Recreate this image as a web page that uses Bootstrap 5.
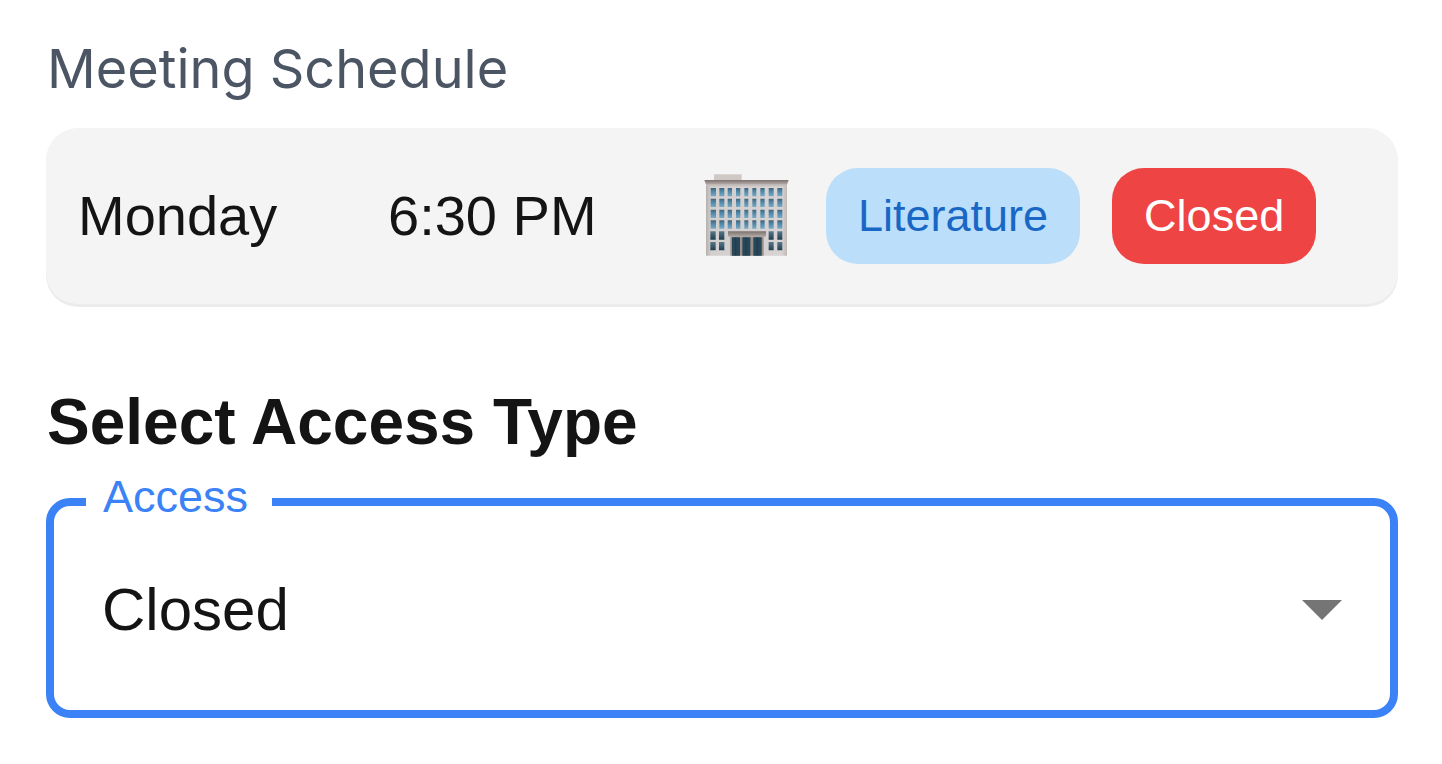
<!DOCTYPE html>
<html lang="en">
<head>
<meta charset="utf-8">
<meta name="viewport" content="width=device-width, initial-scale=1">
<title>Meeting Schedule</title>
<link href="https://cdn.jsdelivr.net/npm/bootstrap@5.3.0/dist/css/bootstrap.min.css" rel="stylesheet">
<style>
  body { font-family: "Liberation Sans", Arial, sans-serif; color: #141414; background: #fff; }
  .page { padding: 29px 44px 40px 46px; }
  .schedule-title { font: 400 54px/80px Inter, sans-serif; color: #4b5563; margin: 0 1px 19px; }
  .meeting { background: #f4f4f4; border-radius: 32px; padding: 40px 32px; box-shadow: 0 3px #ececec; margin-bottom: 78px; font-size: 56px; line-height: 96px; white-space: nowrap; }
  .slot { flex: 0 0 310px; }
  .venue { width: 96px; height: 96px; flex: none; }
  .tags { gap: 32px; }
  .chip { font-size: 45px; padding: 0 32px; border-radius: 32px; }
  .chip-topic { background: #bbdefb; color: #1967c5; }
  .chip-closed { background: #ef4444; color: #fff; }
  .access-title { font-size: 64px; line-height: 80px; font-weight: 700; margin: 0 1px 8px; }
  .access-field { border: 8px solid #3b82f6; border-radius: 24px; padding: 0 32px 24px; }
  .access-field legend { float: none; width: auto; margin: 0; padding: 0 24px 10px 17px; font-size: 45px; line-height: 54px; color: #3b82f6; }
  .access-select { appearance: none; display: block; width: 100%; height: 152px; border: 0; outline: 0; padding: 0 72px 0 16px; color: #141414; font-size: 60px;
    background: transparent url("data:image/svg+xml,%3Csvg xmlns='http://www.w3.org/2000/svg' viewBox='0 0 40 20'%3E%3Cpath d='M0 0h40L20 20z' fill='%23757575'/%3E%3C/svg%3E") no-repeat right 16px center / 40px 20px; }
</style>
</head>
<body>
<main class="page">
  <h2 class="schedule-title">Meeting Schedule</h2>
  <section class="meeting d-flex align-items-center">
    <span class="slot">Monday</span>
    <time class="slot" datetime="18:30">6:30 PM</time>
    <div class="tags d-flex align-items-center">
      <svg class="venue" viewBox="24 24 288 288" role="img" aria-label="In person">
        <defs>
          <linearGradient id="wall" x2="1" y2="0"><stop offset="0" stop-color="#b5b0ae"/><stop offset=".06" stop-color="#d2cfce"/><stop offset=".94" stop-color="#d6d3d2"/><stop offset="1" stop-color="#bfb8b5"/></linearGradient>
          <linearGradient id="glass" x2="0" y2="1"><stop offset="0" stop-color="#42647a"/><stop offset=".4" stop-color="#4f87a8"/><stop offset="1" stop-color="#79a9c6"/></linearGradient>
          <linearGradient id="dark" x2="0" y2="1"><stop offset="0" stop-color="#58788b"/><stop offset="1" stop-color="#203e50"/></linearGradient>
          <linearGradient id="roof" x2="0" y2="1"><stop offset="0" stop-color="#7c716d"/><stop offset="1" stop-color="#b8b0ad"/></linearGradient>
          <g id="floor"><path d="M62 0h16v25h-16zM88 0h15v25h-15zM113 0h13v25h-13zM138 0h13v25h-13zM163 0h12v25h-12zM187 0h12v25h-12zM211 0h13v25h-13zM236 0h15v25h-15zM262 0h15v25h-15z"/></g>
          <g id="sides"><path d="M61 0h16v25h-16zM87 0h16v25h-16zM236 0h15v25h-15zM262 0h15v25h-15z"/></g>
        </defs>
        <path d="M72 43h83v18H72z" fill="#cfc8c5"/>
        <path d="M48 68h243v219H48z" fill="url(#wall)"/>
        <path d="M43 60h253l-5 14H48z" fill="url(#roof)"/>
        <path d="M48 74h243v5H48z" fill="#c4bebc"/>
        <g fill="url(#glass)">
          <use href="#floor" y="84"/><use href="#floor" y="116"/><use href="#floor" y="149"/><use href="#floor" y="181"/>
        </g>
        <g fill="url(#dark)"><use href="#sides" y="214"/><use href="#sides" y="246"/></g>
        <path d="M121 228h100v59H121z" fill="#988e8a"/>
        <path d="M114 214h114v14l-6 4H120l-6-4z" fill="url(#roof)"/>
        <path d="M126 232h24v55h-24zM157 232h24v55h-24zM190 232h25v55h-25z" fill="#274658"/>
        <path d="M137 232v55M168 232v55M202 232v55" stroke="#1d3544" stroke-width="2"/>
      </svg>
      <span class="chip chip-topic">Literature</span>
      <span class="chip chip-closed">Closed</span>
    </div>
  </section>
  <h1 class="access-title">Select Access Type</h1>
  <fieldset class="access-field">
    <legend><label for="access">Access</label></legend>
    <select class="access-select" id="access">
      <option selected>Closed</option>
      <option>Open</option>
    </select>
  </fieldset>
</main>
<script src="https://cdn.jsdelivr.net/npm/bootstrap@5.3.0/dist/js/bootstrap.bundle.min.js"></script>
</body>
</html>
